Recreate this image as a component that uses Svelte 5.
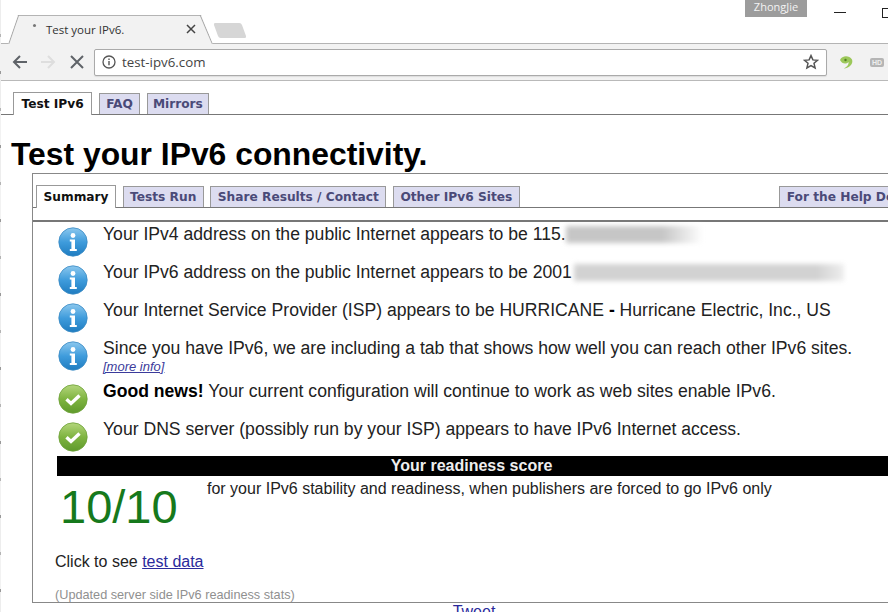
<script>
  const rows = [
    { icon: 'info', html: 'v4' },
    { icon: 'info', html: 'v6' },
    { icon: 'info', html: 'isp' },
    { icon: 'info', html: 'since' },
    { icon: 'ok', html: 'good' },
    { icon: 'ok', html: 'dns' }
  ];
</script>

<svelte:head><title>Test your IPv6.</title></svelte:head>

{#snippet icon(kind)}
  <svg class="status" viewBox="0 0 30 30" width="30" height="30" aria-hidden="true">
    <defs>
      <linearGradient id="g-info" x1="0" y1="0" x2="0" y2="1">
        <stop offset="0" stop-color="#8cc8ee" /><stop offset=".5" stop-color="#3f9cdc" /><stop offset="1" stop-color="#1f7cc0" />
      </linearGradient>
      <linearGradient id="g-ok" x1="0" y1="0" x2="0" y2="1">
        <stop offset="0" stop-color="#b4d67c" /><stop offset=".5" stop-color="#7fb441" /><stop offset="1" stop-color="#5f9a2c" />
      </linearGradient>
    </defs>
    {#if kind === 'info'}
      <circle cx="15" cy="15" r="14.2" fill="url(#g-info)" stroke="#3c8cc4" stroke-width=".8" />
      <circle cx="15" cy="8.5" r="2.4" fill="#fff" />
      <path d="M11.8 12.5h5.2v9.5h1.8v2h-7v-2h1.6v-7.5h-1.6z" fill="#fff" />
    {:else}
      <circle cx="15" cy="15" r="14.2" fill="url(#g-ok)" stroke="#6fa23a" stroke-width=".8" />
      <path d="M8.5 15.2l4.5 4.2 8.5-8" fill="none" stroke="#fff" stroke-width="3.4" />
    {/if}
  </svg>
{/snippet}

<div class="browser">
  <header class="chrome">
    <div class="strip">
      <div class="tab">
        <span class="spin"></span>
        <span class="tab-title">Test your IPv6.</span>
        <svg class="tab-x" viewBox="0 0 10 10" width="10" height="10"><path d="M1 1l8 8M9 1l-8 8" stroke="#444" stroke-width="1.5" /></svg>
      </div>
      <div class="newtab"></div>
      <div class="user">ZhongJie</div>
      <div class="winmin"></div>
      <div class="winmax"></div>
    </div>
    <div class="toolbar">
      <svg class="nav" viewBox="0 0 18 18" width="18" height="18"><path d="M16 9H3M9 3L3 9l6 6" fill="none" stroke="#5f6368" stroke-width="2" /></svg>
      <svg class="nav" viewBox="0 0 18 18" width="18" height="18"><path d="M2 9h13M9 3l6 6-6 6" fill="none" stroke="#dedede" stroke-width="2" /></svg>
      <svg class="nav" viewBox="0 0 18 18" width="18" height="18"><path d="M3 3l12 12M15 3L3 15" fill="none" stroke="#5f6368" stroke-width="2" /></svg>
      <div class="omnibox">
        <svg viewBox="0 0 14 14" width="14" height="14"><circle cx="7" cy="7" r="6" fill="none" stroke="#555" stroke-width="1.3" /><path d="M7 6v4.2M7 3.4v1.5" stroke="#555" stroke-width="1.4" /></svg>
        <span class="url">test-ipv6.com</span>
        <svg class="star" viewBox="0 0 16 16" width="16" height="16"><path d="M8 1.6l1.9 4.3 4.6.4-3.5 3 1.1 4.6L8 11.5l-4.1 2.4L5 9.3l-3.5-3 4.6-.4z" fill="none" stroke="#555" stroke-width="1.5" /></svg>
      </div>
      <svg class="ext" viewBox="0 0 16 16" width="16" height="16"><path d="M2 6C4 1.500 11 1 14 5.500 15.500 9 12 14.500 5.500 14.500 9 13 11 10.500 10.500 8 8 10.500 4 10 2 6z" fill="#9cc85a" /><circle cx="7.500" cy="6" r="1.200" fill="#4f7f22" /></svg>
      <span class="hd">HD</span>
    </div>
  </header>

  <main class="page">
    <nav class="tabs outer">
      <span class="t on">Test IPv6</span>
      <span class="t">FAQ</span>
      <span class="t">Mirrors</span>
    </nav>

    <h1>Test your IPv6 connectivity.</h1>

    <section class="panel">
      <nav class="tabs inner">
        <span class="t on">Summary</span>
        <span class="t">Tests Run</span>
        <span class="t">Share Results / Contact</span>
        <span class="t">Other IPv6 Sites</span>
        <span class="t help">For the Help Desk</span>
      </nav>

      <div class="content">
        {#each rows as r}
          <div class="row" class:since={r.html === 'since'} class:dns={r.html === 'dns'}>
            {@render icon(r.icon)}
            <div class="msg">
              {#if r.html === 'v4'}
                Your IPv4 address on the public Internet appears to be 115.<span class="blur b4"></span>
              {:else if r.html === 'v6'}
                Your IPv6 address on the public Internet appears to be 2001<span class="blur b6"></span>
              {:else if r.html === 'isp'}
                Your Internet Service Provider (ISP) appears to be HURRICANE <b>-</b> Hurricane Electric, Inc., US
              {:else if r.html === 'since'}
                Since you have IPv6, we are including a tab that shows how well you can reach other IPv6 sites.
                <a class="more" href="#more">[more info]</a>
              {:else if r.html === 'good'}
                <b>Good news!</b> Your current configuration will continue to work as web sites enable IPv6.
              {:else}
                Your DNS server (possibly run by your ISP) appears to have IPv6 Internet access.
              {/if}
            </div>
          </div>
        {/each}

        <div class="scorebar">Your readiness score</div>
        <div class="score">
          <div class="num">10/10</div>
          <div class="desc">for your IPv6 stability and readiness, when publishers are forced to go IPv6 only</div>
        </div>
        <p class="click">Click to see <a href="#data">test data</a></p>
        <p class="stats">(Updated server side IPv6 readiness stats)</p>
      </div>
    </section>
    <div class="tweet"><a href="#tweet">Tweet</a></div>
  </main>
</div>

<style>
  :global(body) { margin: 0; background: #fff; overflow: hidden; }
  .browser { position: relative; width: 888px; height: 612px; overflow: hidden; font-family: "Liberation Sans", Arial, sans-serif; color: #111; }
  .browser::before { content: ""; position: absolute; left: 0; top: 0; bottom: 0; width: 1px; z-index: 2; background: repeating-linear-gradient(180deg, #ededed 0 34px, #b4b4b4 34px 37px, #f2f2f2 37px 71px, #999 71px 74px); }
  .chrome { height: 81px; box-sizing: border-box; border-bottom: 1px solid #b9b9b9; display: flex; flex-direction: column; }
  .strip { height: 44px; flex: none; display: flex; align-items: flex-start; padding-left: 8px; box-sizing: border-box; border-bottom: 1px solid #b4b4b4; position: relative; }
  .tab { position: relative; top: 15px; width: 205px; height: 29px; box-sizing: border-box; display: flex; align-items: center; padding: 0 17px 2px 38px; background: #f2f2f2; border-top: 1px solid #b4b4b4; clip-path: polygon(0 100%, 10px 0, 193px 0, 100% 100%); z-index: 1; }
  .tab::before, .tab::after { content: ""; position: absolute; top: -3px; bottom: -3px; width: 1px; background: #a8a8a8; }
  .tab::before { left: 5px; transform: rotate(19deg); }
  .tab::after { right: 6px; transform: rotate(-23deg); }
  .spin { position: absolute; left: 25px; top: 8px; width: 3px; height: 3px; background: #777; border-radius: 50%; }
  .tab-title { flex: 1; font: 11.5px "Open Sans", sans-serif; color: #333; }
  .tab-x { flex: none; }
  .newtab { width: 28px; height: 15px; margin-top: 23px; margin-left: 3px; background: #d6d6d6; transform: skewX(20deg); border-radius: 2px; }
  .user { margin-left: auto; margin-right: 27px; width: 62px; height: 17px; background: #9c9c9c; color: #f3f3f3; font: 11px/14px "Open Sans", sans-serif; text-align: center; }
  .winmin { width: 12px; height: 1px; margin: 12px 36px 0 0; background: #222; }
  .winmax { width: 12px; height: 8px; margin: 8px -8px 0 0; border: 1px solid #222; }
  .toolbar { flex: 1; background: #f2f2f2; display: flex; align-items: center; padding: 0 0 0 11px; gap: 10px; }
  .nav:nth-child(3) { margin-left: 1px; margin-right: -1px; }
  .omnibox { width: 733px; height: 27px; margin: 0 1px 0 -1px; box-sizing: border-box; border: 1px solid #aaa; border-radius: 2px; background: #fff; display: flex; align-items: center; gap: 6px; padding: 0 7px; box-shadow: 0 1px 1px #ddd; }
  .url { flex: 1; font: 13.3px "Open Sans", sans-serif; color: #444; }
  .hd { margin-left: 6px; width: 14px; height: 9px; border-radius: 2px; background: #b5b5b5; color: #eee; font: bold 7px/9px "Liberation Sans", sans-serif; text-align: center; }

  .page { position: relative; }
  .tabs { display: flex; align-items: flex-end; border-bottom: 1px solid #777; font: bold 12.2px/1 "DejaVu Sans", Verdana, sans-serif; }
  .outer { height: 34px; box-sizing: border-box; padding-left: 13px; gap: 7px; }
  .t { height: 21px; box-sizing: border-box; padding: 0 6.5px; display: flex; align-items: center; white-space: nowrap; background: #dcdcf0; border: 1px solid #999; border-bottom: 0; color: #4a4a78; }
  .t.on { background: #fff; color: #111; margin-bottom: -1px; height: 23px; padding-top: 1px; }
  .outer .t { padding: 0 6px; }
  .outer .t.on { padding: 1px 7.5px 0; }
  .outer .t:last-child { padding: 0 5px; }
  h1 { margin: 0; padding: 21px 0 0 11px; font: bold 31.85px/37px "Liberation Sans", Arial, sans-serif; color: #000; height: 37px; }
  .panel { margin: 0 0 0 32px; width: 900px; height: 430px; box-sizing: border-box; border: 1px solid #888; border-right: 0; }
  .inner { height: 34px; box-sizing: border-box; padding-left: 3px; gap: 6.5px; }
  .help { margin-left: 253px; }
  .content { border-top: 2px solid #777; margin-top: 12px; padding: 3px 0 0 24px; }
  .row { display: flex; gap: 15px; height: 38px; }
  .row.since { height: 43px; }
  .row.dns { height: 34px; }
  .row .status { margin-top: 2px; margin-left: 1px; flex: none; }
  .msg { margin-top: -1px; font-size: 17.6px; line-height: 21px; color: #222; white-space: nowrap; }
  .msg b { color: #000; }
  .more { display: block; margin-top: 2px; font: italic 13px/12px "Liberation Sans", sans-serif; color: #3b3b9b; }
  .blur { display: inline-block; height: 17px; vertical-align: -3px; filter: blur(2.5px); }
  .b4 { width: 137px; background: linear-gradient(90deg, #c6c6c6 70%, #fff); }
  .b6 { width: 270px; margin-left: 2px; background: linear-gradient(90deg, #d2d2d2 90%, #eee); }
  .scorebar { box-sizing: border-box; width: 840px; height: 20px; padding-right: 11px; margin-top: 2px; background: #000; color: #eee; font: bold 16px/20px "Liberation Sans", sans-serif; text-align: center; }
  .score { display: flex; height: 71px; }
  .num { width: 147px; padding: 3px 0 0 3px; font-size: 47px; line-height: 55px; color: #16791c; }
  .desc { margin-top: 1px; font-size: 16px; line-height: 24px; color: #222; white-space: nowrap; }
  .click { margin: 5px 0 0 -2px; font-size: 16px; line-height: 20px; color: #222; }
  .click a { color: #2a2a9c; }
  .stats { margin: 15px 0 0 -2px; font-size: 12.7px; line-height: 16px; color: #909090; }
  .tweet { text-align: center; padding-left: 60px; font-size: 16px; line-height: 18px; }
  .tweet a { color: #2a2a9c; }
</style>
